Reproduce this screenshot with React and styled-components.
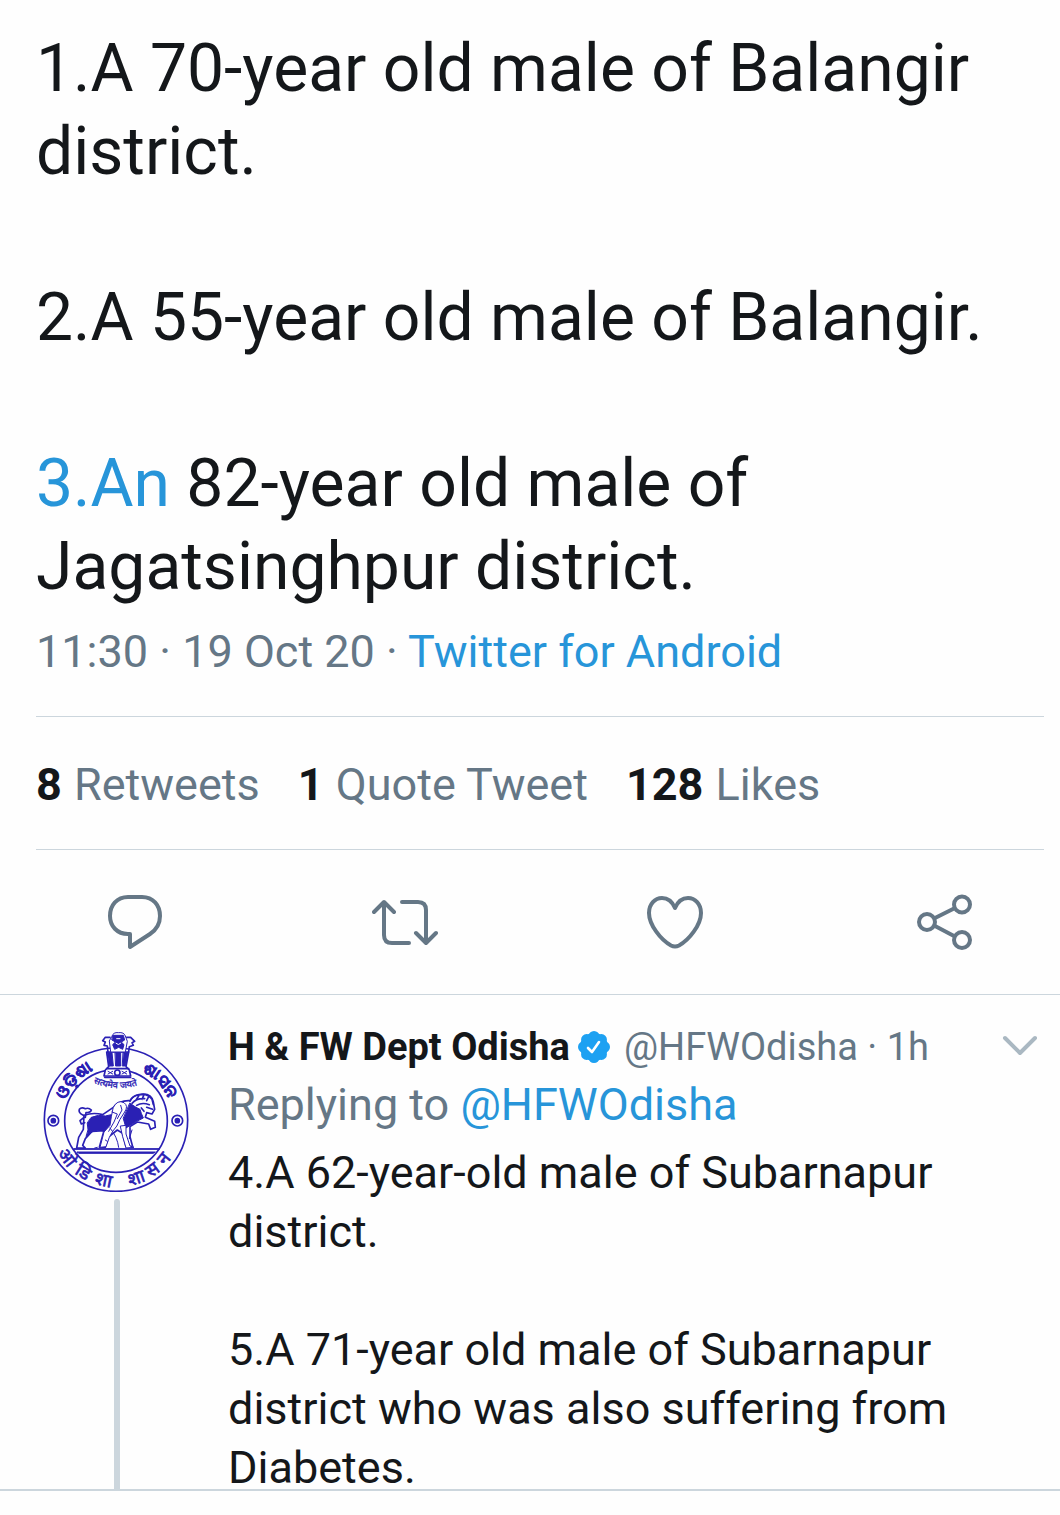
import styled, { createGlobalStyle } from "styled-components";

const GlobalStyle = createGlobalStyle`
    * {
        box-sizing: border-box;
    }
    body {
        margin: 0;
        background: #fefefe;
        color: #14171a;
        font-family: Roboto, sans-serif;
    }
`
const Page = styled.main`
    display: flex;
    flex-direction: column;
    padding-bottom: 24px;
`
const Tweet = styled.article`
    padding: 27px 16px 0 36px;
`
const TweetText = styled.p`
    margin: 0;
    font-size: 66px;
    line-height: 83px;
    white-space: pre-wrap;
`
const Link = styled.a`
    color: #2795d9;
    text-decoration: none;
`
const Meta = styled.p`
    margin: 0;
    padding: 18px 0 38px;
    border-bottom: 1px solid #ccd6dd;
    color: #657786;
    font-size: 45px;
    line-height: 52px;
`
const Stats = styled.div`
    display: flex;
    flex-wrap: wrap;
    gap: 0 38px;
    padding: 42px 0 38px;
    border-bottom: 1px solid #ccd6dd;
    font-size: 45px;
    line-height: 52px;
`
const Stat = styled.a`
    color: #657786;
    text-decoration: none;
    strong {
        margin-right: 1px;
        color: #14171a;
        font-weight: 700;
    }
`
const Actions = styled.div`
    display: flex;
    justify-content: space-between;
    padding: 38px 82px 38px 102px;
    border-bottom: 1px solid #ccd6dd;
`
const IconButton = styled.button`
    display: flex;
    align-items: center;
    justify-content: center;
    padding: 0;
    border: 0;
    background: none;
    color: ${props => props.$light ? "#aab8c2" : "#657786"};
    cursor: pointer;
    svg {
        display: block;
        fill: none;
        stroke: currentColor;
        stroke-width: 4;
        stroke-linecap: round;
        stroke-linejoin: round;
    }
`
const Reply = styled.article`
    display: flex;
    gap: 36px;
    padding: 26px 20px 0 42px;
    border-bottom: 2px solid #ccd6dd;
`
const AvatarColumn = styled.div`
    display: flex;
    flex: none;
    flex-direction: column;
    align-items: center;
    gap: 7px;
    width: 150px;
    padding-top: 10px;
`
const ThreadLine = styled.div`
    flex: 1;
    width: 6px;
    border-radius: 3px 3px 0 0;
    background: #ccd6dd;
`
const ReplyBody = styled.div`
    flex: 1;
    min-width: 0;
`
const ReplyHead = styled.header`
    display: flex;
    align-items: center;
    gap: 7px;
    color: #657786;
    font-size: 38px;
    line-height: 52px;
    strong {
        color: #14171a;
        font-weight: 700;
    }
    button {
        margin-left: auto;
    }
`
const Handle = styled.span`
    padding-left: 6px;
`
const ReplyTo = styled.p`
    margin: 0;
    padding: 6px 0 12px;
    color: #657786;
    font-size: 45px;
    line-height: 52px;
`
/* the last line sits right on the border of the card */
const ReplyText = styled.p`
    margin: 0 0 -8px;
    font-size: 45px;
    line-height: 59px;
    white-space: pre-wrap;
`
const EmblemSvg = styled.svg`
    display: block;
    flex: none;
    fill: none;
    stroke: #2a20b4;
    stroke-width: 5;
    stroke-linecap: round;
    stroke-linejoin: round;
    text {
        fill: #2a20b4;
        stroke-width: 2;
        font-family: "Noto Sans", sans-serif;
        font-size: 50px;
        font-weight: 700;
    }
    .hindi {
        font-size: 54px;
        font-weight: 400;
        text-anchor: middle;
    }
    .motto {
        stroke-width: 1;
        font-size: 28px;
        font-weight: 400;
    }
    .ink {
        fill: #2a20b4;
    }
    .paper {
        fill: #fefefe;
    }
    .thin {
        stroke-width: 3;
    }
`

// syllables of the lower ring and their distance along the arc
const ring = [
    ["ओ", 98],
    ["डि", 170],
    ["शा", 243],
    ["शा", 352],
    ["स", 412],
    ["न", 464],
]

function Emblem(){
    return (
        <EmblemSvg width="150" height="161" viewBox="36 33 450 483" role="img" aria-label="Odisha">
            <circle cx="258" cy="299" r="215" />
            <circle cx="258" cy="303" r="154" />
            <circle cx="70" cy="302" r="16" />
            <circle cx="70" cy="302" r="6" className="ink" />
            <circle cx="442" cy="302" r="16" />
            <circle cx="442" cy="302" r="6" className="ink" />
            <defs>
                <path id="arcLeft" d="M106 240A166 166 0 0 1 216 143" />
                <path id="arcRight" d="M334 155A166 166 0 0 1 430 290" />
                <path id="arcBottom" d="M58 334A203 203 0 0 0 458 334" />
                <path id="arcMotto" d="M190 188Q260 222 346 188" />
            </defs>
            <text><textPath href="#arcLeft">ଓଡ଼ିଶା</textPath></text>
            <text><textPath href="#arcRight">ଶାସନ</textPath></text>
            {ring.map(([syllable, offset]) => (
                <text className="hindi" key={offset}><textPath href="#arcBottom" startOffset={offset}>{syllable}</textPath></text>
            ))}
            <text className="motto"><textPath href="#arcMotto">सत्यमेव जयते</textPath></text>
            {/* lion capital */}
            <path className="paper" d="M222 168L226 150L236 140L230 96L296 96L288 140L298 150L302 168Z" />
            <path className="paper thin" d="M246 48Q250 36 265 38Q282 36 286 48L292 64L286 96L242 96L238 64Z" />
            <path className="ink thin" d="M250 46L280 46L284 60L274 66L282 74L278 88L266 82L254 88L248 74L256 66L246 60Z" />
            <path className="thin" d="M260 56L270 56M258 70Q265 78 272 70" stroke="#fefefe" />
            <path d="M240 52L226 52L218 62L226 66L222 76L232 78L234 96M290 52L302 52L314 64L306 68L310 76L298 80L296 96" />
            <path className="ink thin" d="M232 98L246 98L250 138L238 138ZM256 98L272 98L272 138L258 138ZM280 98L294 98L286 138L278 138Z" />
            <path d="M230 146L296 146M224 172L302 172" />
            <circle cx="262" cy="158" r="8" />
            <path d="M234 154L248 162M234 162L248 154M276 154L290 162M276 162L290 154" className="thin" />
            {/* horse, warrior and base */}
            <path className="paper" d="M162 286Q190 276 218 284L250 262Q270 240 300 242Q312 222 340 222Q366 222 370 246L374 268L366 282L350 278L346 292L374 304L376 322L362 328L356 312L322 306L300 320L300 350L308 380L288 380L278 340L262 330L234 352L226 382L208 382L222 332L186 334L166 356L158 376L166 384L140 384L146 352L160 328Z" />
            <path className="ink thin" d="M184 292Q206 282 226 288L244 284L246 310L226 334Q200 326 186 336L168 350Q178 330 172 310ZM300 250L318 262L330 268L334 280L340 294L320 304L288 324L280 296Z" />
            <path d="M162 292L150 302L154 312L164 308M160 286Q144 278 148 268Q154 260 166 266Q176 262 184 270Q182 278 168 278M168 278L166 292" />
            <path d="M300 244Q306 226 332 224Q352 220 366 238L370 254M306 250Q320 234 344 236M320 256Q336 246 358 254M350 262L368 268M334 264L342 274M326 228L318 240M342 224L336 238M356 230L350 242" />
            <path className="paper thin" d="M250 262Q262 238 282 248Q296 258 284 276L270 298Q262 320 248 334L238 352L228 380L210 382L222 336L240 316L244 290Z" />
            <path className="thin" d="M246 276L262 282L252 306L236 334M272 256L276 270L262 296M226 360L232 364" />
            <path className="paper thin" d="M272 318L288 316L288 342L300 378L312 382L288 384L278 350Z" />
            <path className="ink thin" d="M132 386H388V388H132ZM142 396H376L370 400H148Z" />
            <path d="M240 324Q262 350 266 382M202 382L194 384M306 330L298 356" className="thin" />
        </EmblemSvg>
    )
}

function Verified(){
    const lobes = [0, 1, 2, 3, 4, 5, 6, 7];
    return (
        <svg width="34" height="34" viewBox="0 0 34 34" fill="#1da1f2" role="img" aria-label="Verified">
            <circle cx="17" cy="17" r="14" />
            {lobes.map(i => <circle key={i} cx="17" cy="6.5" r="5.5" transform={`rotate(${i * 45} 17 17)`} />)}
            <path d="M11 18L15 22L22 12" fill="none" stroke="#fff" strokeWidth="2.6" strokeLinecap="round" strokeLinejoin="round" />
        </svg>
    )
}

export default function App(){
    return (
        <Page>
            <GlobalStyle />
            <Tweet>
                <TweetText>
                    {"1.A 70-year old male of Balangir district.\n\n2.A 55-year old male of Balangir.\n\n"}
                    <Link href="#3.An">3.An</Link>
                    {" 82-year old male of "}
                    {"Jagatsinghpur district."}
                </TweetText>
                <Meta>11:30 · 19 Oct 20 · <Link href="#source">Twitter for Android</Link></Meta>
                <Stats>
                    <Stat href="#retweets"><strong>8</strong> Retweets</Stat>
                    <Stat href="#quotes"><strong>1</strong> Quote Tweet</Stat>
                    <Stat href="#likes"><strong>128</strong> Likes</Stat>
                </Stats>
            </Tweet>
            <Actions>
                <IconButton aria-label="Reply">
                    <svg width="66" height="68" viewBox="102 888 66 68">
                        <path d="M128 897H142C153 897 160 905 160 916C160 924 156 930 150 934L130 947V934H128C117 934 110 926 110 916C110 905 117 897 128 897Z" />
                    </svg>
                </IconButton>
                <IconButton aria-label="Retweet">
                    <svg width="66" height="68" viewBox="372 888 66 68">
                        <path d="M374 912L384 902L394 912M384 903V935Q384 943 392 943H409M402 902H418Q426 902 426 910V942M416 933L426 943L436 933" />
                    </svg>
                </IconButton>
                <IconButton aria-label="Like">
                    <svg width="66" height="68" viewBox="642 888 66 68">
                        <path d="M675 908C672 901 667 898 662 898C655 898 649 904 649 913C649 925 661 940 671 945.500Q675 947.500 679 945.500C689 940 701 925 701 913C701 904 695 898 688 898C683 898 678 901 675 908Z" />
                    </svg>
                </IconButton>
                <IconButton aria-label="Share">
                    <svg width="66" height="68" viewBox="912 888 66 68">
                        <circle cx="927" cy="922" r="8" />
                        <circle cx="962" cy="904.500" r="8" />
                        <circle cx="962" cy="940" r="8" />
                        <path d="M935 918L954 908.500M935 926L954 936" />
                    </svg>
                </IconButton>
            </Actions>
            <Reply>
                <AvatarColumn>
                    <Emblem />
                    <ThreadLine />
                </AvatarColumn>
                <ReplyBody>
                    <ReplyHead>
                        <strong>H &amp; FW Dept Odisha</strong>
                        <Verified />
                        <Handle>@HFWOdisha · 1h</Handle>
                        <IconButton $light aria-label="More">
                            <svg width="40" height="30" viewBox="0 0 40 30">
                                <path d="M5 6L20 21L35 6" />
                            </svg>
                        </IconButton>
                    </ReplyHead>
                    <ReplyTo>Replying to <Link href="#HFWOdisha">@HFWOdisha</Link></ReplyTo>
                    <ReplyText>
                        {"4.A 62-year-old male of Subarnapur district.\n\n5.A 71-year old male of Subarnapur district who was also suffering from Diabetes."}
                    </ReplyText>
                </ReplyBody>
            </Reply>
        </Page>
    )
}
